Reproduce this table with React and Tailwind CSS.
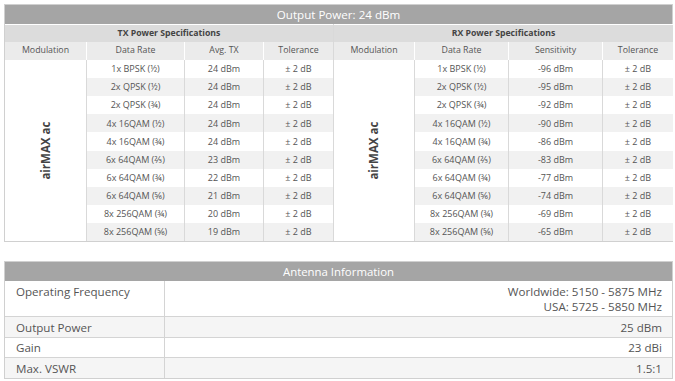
import React from 'react';

const txRows = [
    ['1x BPSK (½)', '24 dBm'],
    ['2x QPSK (½)', '24 dBm'],
    ['2x QPSK (¾)', '24 dBm'],
    ['4x 16QAM (½)', '24 dBm'],
    ['4x 16QAM (¾)', '24 dBm'],
    ['6x 64QAM (⅔)', '23 dBm'],
    ['6x 64QAM (¾)', '22 dBm'],
    ['6x 64QAM (⅚)', '21 dBm'],
    ['8x 256QAM (¾)', '20 dBm'],
    ['8x 256QAM (⅚)', '19 dBm'],
];

const rxRows = [
    ['1x BPSK (½)', '-96 dBm'],
    ['2x QPSK (½)', '-95 dBm'],
    ['2x QPSK (¾)', '-92 dBm'],
    ['4x 16QAM (½)', '-90 dBm'],
    ['4x 16QAM (¾)', '-86 dBm'],
    ['6x 64QAM (⅔)', '-83 dBm'],
    ['6x 64QAM (¾)', '-77 dBm'],
    ['6x 64QAM (⅚)', '-74 dBm'],
    ['8x 256QAM (¾)', '-69 dBm'],
    ['8x 256QAM (⅚)', '-65 dBm'],
];

const SpecHalf = ({ title, valueLabel, rows, cols, className }) => (
    <div className={className}>
        <div className="h-[18px] flex items-center justify-center bg-[#dcdcdc] font-bold text-[8.7px] text-[#444] border-t border-white">
            {title}
        </div>
        <div className={`grid ${cols} h-[18px] bg-[#ebebeb] text-[8.8px] text-[#555]`}>
            <div className="flex items-center justify-center">Modulation</div>
            <div className="flex items-center justify-center border-l border-white">Data Rate</div>
            <div className="flex items-center justify-center border-l border-white">{valueLabel}</div>
            <div className="flex items-center justify-center border-l border-white">Tolerance</div>
        </div>
        <div className={`grid ${cols} grid-rows-10 h-[181px]`}>
            <div className="row-span-10 flex items-center justify-center bg-white">
                <span className="-rotate-90 whitespace-nowrap font-bold text-[11.5px] text-[#444]">airMAX ac</span>
            </div>
            {rows.map(([rate, value], i) => {
                const bg = i % 2 === 0 ? 'bg-white' : 'bg-[#f1f1f1]';
                return (
                    <React.Fragment key={i}>
                        <div className={`${bg} flex items-center justify-center border-l border-[#d9d9d9] text-[9px] text-[#555]`}>{rate}</div>
                        <div className={`${bg} flex items-center justify-center border-l border-[#d9d9d9] text-[9px] text-[#555]`}>{value}</div>
                        <div className={`${bg} flex items-center justify-center border-l border-[#d9d9d9] text-[9px] text-[#555]`}>± 2 dB</div>
                    </React.Fragment>
                );
            })}
        </div>
    </div>
);

const antennaRows = [
    ['Operating Frequency', ['Worldwide: 5150 - 5875 MHz', 'USA: 5725 - 5850 MHz'], 'h-[35px] pt-[3px] justify-start', 'bg-white'],
    ['Output Power', ['25 dBm'], 'h-[20px] justify-center', 'bg-[#f5f5f5]'],
    ['Gain', ['23 dBi'], 'h-[19px] justify-center', 'bg-white'],
    ['Max. VSWR', ['1.5:1'], 'h-[20px] justify-center', 'bg-[#f5f5f5]'],
];

const App = () => {
    return (
        <div className="min-h-screen bg-white p-1" style={{ fontFamily: '"Open Sans", "Noto Sans", sans-serif' }}>
            <div className="w-[669px] border border-[#d0d0d0]">
                <div className="h-[19px] flex items-center justify-center bg-[#a5a5a5] text-white text-[11.6px]">
                    Output Power: 24 dBm
                </div>
                <div className="flex">
                    <SpecHalf
                        title="TX Power Specifications"
                        valueLabel="Avg. TX"
                        rows={txRows}
                        cols="grid-cols-[81px_98px_79px_70px]"
                        className="w-[328px]"
                    />
                    <SpecHalf
                        title="RX Power Specifications"
                        valueLabel="Sensitivity"
                        rows={rxRows}
                        cols="grid-cols-[80px_94px_94px_71px]"
                        className="w-[341px] border-l border-[#d9d9d9]"
                    />
                </div>
            </div>

            <div className="w-[669px] mt-[19px] border border-[#d0d0d0]">
                <div className="h-[19px] flex items-center justify-center bg-[#a5a5a5] text-white text-[11.4px]">
                    Antenna Information
                </div>
                {antennaRows.map(([label, values, rowCls, bg], i) => (
                    <div key={i} className={`flex ${bg} ${i > 0 ? 'border-t border-[#d4d4d4]' : ''}`}>
                        <div className={`w-[159px] flex flex-col ${rowCls} pl-[11px] text-[11.6px] text-[#555] leading-[15px]`}>{label}</div>
                        <div className={`flex-1 flex flex-col items-end ${rowCls} pr-[10px] border-l border-[#d4d4d4] text-[11.6px] text-[#555] leading-[15px]`}>
                            {values.map((v) => (
                                <div key={v}>{v}</div>
                            ))}
                        </div>
                    </div>
                ))}
            </div>
        </div>
    );
};

export default App;
